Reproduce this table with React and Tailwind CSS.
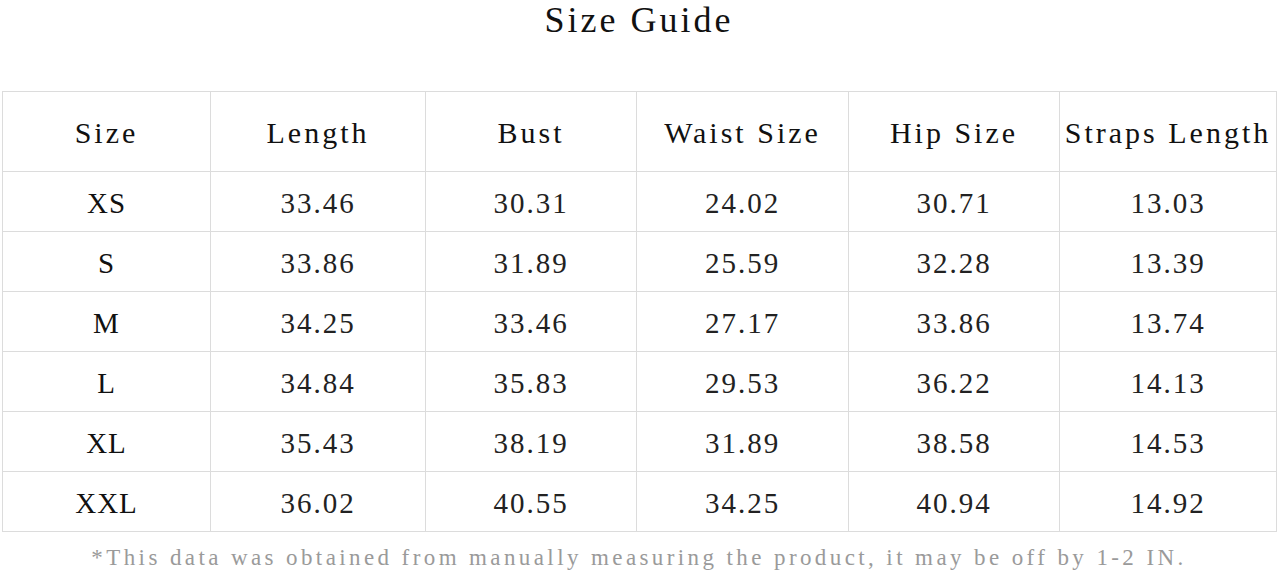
import React from 'react';

const COLUMNS = ['Size', 'Length', 'Bust', 'Waist Size', 'Hip Size', 'Straps Length'];
const WIDTHS = ['w-[208px]', 'w-[215px]', 'w-[211px]', 'w-[212px]', 'w-[211px]', 'w-[217px]'];

const ROWS = [
  ['XS', '33.46', '30.31', '24.02', '30.71', '13.03'],
  ['S', '33.86', '31.89', '25.59', '32.28', '13.39'],
  ['M', '34.25', '33.46', '27.17', '33.86', '13.74'],
  ['L', '34.84', '35.83', '29.53', '36.22', '14.13'],
  ['XL', '35.43', '38.19', '31.89', '38.58', '14.53'],
  ['XXL', '36.02', '40.55', '34.25', '40.94', '14.92'],
];

export default function App() {
  return (
    <div className="w-[1278px] h-[573px] bg-white text-[#1a1a1a] font-['Liberation_Serif',serif]">
      {/* Title */}
      <div className="h-[91px] flex justify-center">
        <h1 className="text-[36px] leading-[40px] tracking-[3px] text-[#111]">Size Guide</h1>
      </div>

      {/* Table */}
      <div className="px-[2px]">
        <table className="border-collapse table-fixed w-[1274px]">
          <thead>
            <tr className="h-[80px]">
              {COLUMNS.map((c, i) => (
                <th
                  key={c}
                  className={`${WIDTHS[i]} border border-[#dcdcdc] text-[30px] leading-[32px] font-normal tracking-[3px] text-center text-[#111] p-0 pt-[2px] whitespace-nowrap`}
                >
                  {c}
                </th>
              ))}
            </tr>
          </thead>
          <tbody>
            {ROWS.map((row) => (
              <tr key={row[0]} className="h-[60px]">
                {row.map((v, i) => (
                  <td
                    key={i}
                    className={`border border-[#dcdcdc] text-center text-[29px] leading-[32px] p-0 pt-[3px] ${i === 0 ? 'tracking-[1px] text-[#111]' : 'tracking-[2px] text-[#222]'}`}
                  >
                    {v}
                  </td>
                ))}
              </tr>
            ))}
          </tbody>
        </table>
      </div>

      {/* Note */}
      <div className="flex justify-center pt-[13px]">
        <p className="text-[23px] leading-[26px] tracking-[3.4px] text-[#9a9a9a] whitespace-nowrap">
          *This data was obtained from manually measuring the product, it may be off by 1-2 IN.
        </p>
      </div>
    </div>
  );
}
